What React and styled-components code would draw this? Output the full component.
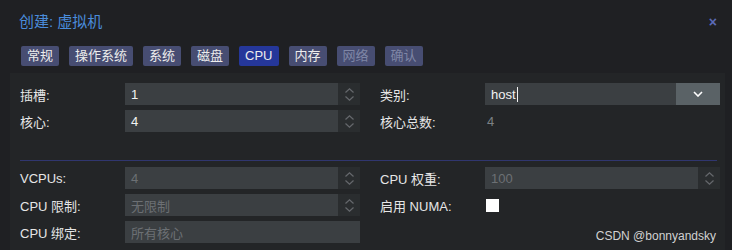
import React from 'react';
import styled, { createGlobalStyle } from 'styled-components';

const GlobalStyle = createGlobalStyle`
  body {
    margin: 0;
    background: #1f2023;
    font-family: "Liberation Sans", "Noto Sans CJK SC", sans-serif;
  }
`;

const Window = styled.div`
  position: relative;
  width: 732px;
  height: 250px;
  background: #1f2023;
  overflow: hidden;
`;

const TitleBar = styled.div`
  display: flex;
  justify-content: space-between;
  align-items: center;
  height: 20px;
  padding: 12px 15px 0 19px;
`;

const Title = styled.div`
  font-size: 15px;
  line-height: 20px;
  color: #4a8cdb;
`;

const Close = styled.div`
  font-size: 14px;
  font-weight: bold;
  line-height: 20px;
  color: #5b6ab6;
`;

const Tabs = styled.div`
  display: flex;
  gap: 10px;
  padding: 14px 0 0 21px;
`;

const Tab = styled.div`
  height: 20px;
  padding: 0 6px;
  border-radius: 2px;
  font-size: 13px;
  line-height: 20px;
  background: ${({ $active }) => ($active ? '#25379a' : '#474d72')};
  color: ${({ $disabled }) => ($disabled ? '#7f86a6' : '#ececec')};
`;

const Panel = styled.div`
  margin: 7px 7px 0 10px;
  padding: 10px 8px 20px 10px;
  background: #232527;
`;

const Section = styled.div`
  display: grid;
  grid-template-columns: 340px 340px;
  column-gap: 20px;
`;

const Column = styled.div`
  display: flex;
  flex-direction: column;
  gap: 5px;
`;

const Row = styled.div`
  display: flex;
  align-items: center;
  height: 22px;
`;

const Label = styled.div`
  width: 105px;
  flex-shrink: 0;
  font-size: 13px;
  color: #e6e6e6;
`;

const Field = styled.div`
  flex: 1;
  display: flex;
  height: 22px;
`;

const Input = styled.div`
  flex: 1;
  display: flex;
  align-items: center;
  padding-left: 6px;
  background: #3b3f42;
  font-size: 13px;
  color: ${({ $disabled }) => ($disabled ? '#6c7074' : '#f2f2f2')};
`;

const Spinner = styled.div`
  width: 22px;
  display: flex;
  flex-direction: column;
  align-items: center;
  justify-content: center;
  gap: 3px;
  background: #2a2d2f;
`;

const Trigger = styled.div`
  width: 44px;
  display: flex;
  align-items: center;
  justify-content: center;
  background: #5a6266;
`;

const Caret = styled.span`
  display: inline-block;
  width: 1px;
  height: 15px;
  margin-left: 1px;
  background: #f2f2f2;
`;

const Value = styled.div`
  padding-left: 2px;
  font-size: 13px;
  color: #7c8084;
`;

const Checkbox = styled.div`
  width: 13px;
  height: 13px;
  margin-left: 1px;
  background: #ffffff;
`;

const Separator = styled.div`
  height: 1px;
  margin: 28px 0 6px;
  background: #30366f;
`;

const Watermark = styled.div`
  position: absolute;
  right: 16px;
  bottom: 7px;
  font-size: 12px;
  color: #d2d2d2;
`;

const Chevron = ({ up, color = '#66696d', w = 9, h = 5 }) => (
  <svg width={w} height={h} viewBox="0 0 9 5" fill="none">
    <path
      d={up ? 'M0.5 4.5 L4.5 0.8 L8.5 4.5' : 'M0.5 0.5 L4.5 4.2 L8.5 0.5'}
      stroke={color}
      strokeWidth="1.2"
    />
  </svg>
);

const NumberField = ({ value, disabled }) => (
  <Field>
    <Input $disabled={disabled}>{value}</Input>
    <Spinner>
      <Chevron up />
      <Chevron />
    </Spinner>
  </Field>
);

const tabs = [
  { name: '常规' },
  { name: '操作系统' },
  { name: '系统' },
  { name: '磁盘' },
  { name: 'CPU', active: true },
  { name: '内存' },
  { name: '网络', disabled: true },
  { name: '确认', disabled: true },
];

const App = () => (
  <Window>
    <GlobalStyle />
    <TitleBar>
      <Title>创建: 虚拟机</Title>
      <Close>×</Close>
    </TitleBar>
    <Tabs>
      {tabs.map((t) => (
        <Tab key={t.name} $active={t.active} $disabled={t.disabled}>
          {t.name}
        </Tab>
      ))}
    </Tabs>
    <Panel>
      <Section>
        <Column>
          <Row>
            <Label>插槽:</Label>
            <NumberField value="1" />
          </Row>
          <Row>
            <Label>核心:</Label>
            <NumberField value="4" />
          </Row>
        </Column>
        <Column>
          <Row>
            <Label>类别:</Label>
            <Field>
              <Input>
                host
                <Caret />
              </Input>
              <Trigger>
                <svg width="10" height="6" viewBox="0 0 10 6" fill="none">
                  <path d="M1 1 L5 5 L9 1" stroke="#ffffff" strokeWidth="1.6" />
                </svg>
              </Trigger>
            </Field>
          </Row>
          <Row>
            <Label>核心总数:</Label>
            <Value>4</Value>
          </Row>
        </Column>
      </Section>
      <Separator />
      <Section>
        <Column>
          <Row>
            <Label>VCPUs:</Label>
            <NumberField value="4" disabled />
          </Row>
          <Row>
            <Label>CPU 限制:</Label>
            <NumberField value="无限制" disabled />
          </Row>
          <Row>
            <Label>CPU 绑定:</Label>
            <Field>
              <Input $disabled>所有核心</Input>
            </Field>
          </Row>
        </Column>
        <Column>
          <Row>
            <Label>CPU 权重:</Label>
            <NumberField value="100" disabled />
          </Row>
          <Row>
            <Label>启用 NUMA:</Label>
            <Checkbox />
          </Row>
        </Column>
      </Section>
    </Panel>
    <Watermark>CSDN @bonnyandsky</Watermark>
  </Window>
);

export default App;
